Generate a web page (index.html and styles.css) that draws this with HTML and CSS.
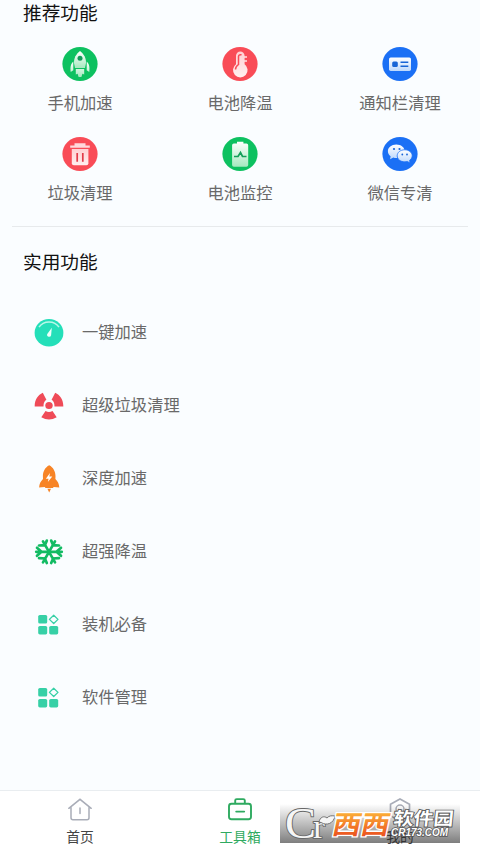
FILE: index.html
```html
<!DOCTYPE html>
<html lang="zh-CN">
<head>
<meta charset="utf-8">
<title>工具箱</title>
<link rel="stylesheet" href="styles.css">
</head>
<body>
<svg class="defs" width="0" height="0">
  <defs>
    <linearGradient id="fadeGreen" x2="0" y2="1"><stop offset="0" stop-color="#fff"/><stop offset="1" stop-color="#a5e9bf"/></linearGradient>
    <linearGradient id="fadeRed" x2="0" y2="1"><stop offset="0" stop-color="#ffd0d3"/><stop offset="1" stop-color="#fff0f0"/></linearGradient>
    <linearGradient id="fadeBlue" x2="0" y2="1"><stop offset="0" stop-color="#fff"/><stop offset="1" stop-color="#bdd8fc"/></linearGradient>
    <linearGradient id="orange" x2="0" y2="1"><stop offset="0.1" stop-color="#ffc23c"/><stop offset="0.9" stop-color="#e9481c"/></linearGradient>
    <symbol id="apps" viewBox="0 0 30 30">
      <g fill="#36d0a6"><rect x="4.2" y="5" width="9" height="8.6" rx="1.6"/><rect x="4.2" y="16" width="9" height="8.4" rx="1.6"/><rect x="15.2" y="16" width="9" height="8.4" rx="1.6"/></g>
      <path d="M19.7 5.3 24 9.4l-4.3 4.1-4.3-4.1z" fill="none" stroke="#36d0a6" stroke-width="1.3" stroke-linejoin="round"/>
    </symbol>
  </defs>
</svg>
<main class="content">
  <h2 class="title">推荐功能</h2>
  <section class="grid">
    <div class="tool">
      <svg viewBox="0 0 36 36"><ellipse cx="18" cy="18" rx="17.6" ry="17" fill="#0dc160"/><g fill="url(#fadeGreen)"><path d="M18 5c4 3 6.2 7.300 6 12l-1 5H13l-1-5c-.2-4.700 2-9 6-12z"/><path d="M11.300 15.500v8.700L8.700 26c-.5-5 0-8.200 2.600-10.500zM24.700 15.500v8.700l2.600 1.800c.5-5 0-8.200-2.600-10.500zM13.800 23h8.400v5.500l-1.800-.7-1 3.200h-2.800l-1-3.200-1.800.7z"/></g><circle cx="18" cy="12.300" r="2.500" fill="#119b59"/></svg>
      <span>手机加速</span>
    </div>
    <div class="tool">
      <svg viewBox="0 0 36 36"><ellipse cx="18" cy="18" rx="17.600" ry="17" fill="#f94c57"/><path d="M14 9.800a4.300 4.300 0 0 1 8.600 0v8.400a7.300 7.300 0 1 1-8.600 0z" fill="url(#fadeRed)"/><path d="M16.500 18.500v-8a2 2 0 0 1 3-1.500M16.500 14v4.500c-2 1.500-3.200 2.800-3 5" fill="none" stroke="#f94c57" stroke-width="1.500"/><path d="M22 11h3M22 15h3" stroke="#ffe0e2" stroke-width="1.300"/></svg>
      <span>电池降温</span>
    </div>
    <div class="tool">
      <svg viewBox="0 0 36 36"><ellipse cx="18" cy="18" rx="17.600" ry="17" fill="#1b70f5"/><rect x="7" y="11.500" width="22" height="13.500" rx="1.700" fill="url(#fadeBlue)"/><rect x="10.200" y="15.500" width="5.600" height="5.500" rx="1.500" fill="#1764d6"/><path d="M18.500 16.300h7.800M18.500 20.200h7.800" stroke="#1764d6" stroke-width="1.500"/></svg>
      <span>通知栏清理</span>
    </div>
    <div class="tool">
      <svg viewBox="0 0 36 36"><ellipse cx="18" cy="18" rx="17.600" ry="17" fill="#f94c57"/><path d="M12.500 9.500V7.300h11v2.200h4.300v2.200H8.200V9.500z" fill="#ffd9dc"/><path d="M9.800 13h16.600v14.300q0 2-2 2H11.800q-2 0-2-2z" fill="url(#fadeRed)"/><path d="M15.200 17v8.700M20.800 17v8.700" stroke="#e23b49" stroke-width="1.700"/></svg>
      <span>垃圾清理</span>
    </div>
    <div class="tool">
      <svg viewBox="0 0 36 36"><ellipse cx="18" cy="18" rx="17.600" ry="17" fill="#0dc160"/><path d="M15 7.500V5.800h6.400v1.700h3q1.800 0 1.800 1.800V29q0 1.700-1.800 1.700H11.900q-1.800 0-1.800-1.700V9.300q0-1.800 1.800-1.800z" fill="url(#fadeGreen)"/><path d="M12 20.500h4l2.500-4 2 4h4" fill="none" stroke="#149f5a" stroke-width="1.700"/></svg>
      <span>电池监控</span>
    </div>
    <div class="tool">
      <svg viewBox="0 0 36 36"><ellipse cx="18" cy="18" rx="17.600" ry="17" fill="#1b70f5"/><path d="M14.300 8.500c-4.800 0-8.400 3-8.400 6.700 0 2 1 3.800 2.700 5l-.5 3 3.200-1.600q1.500.5 3 .5c4.700 0 8.300-3 8.300-6.900s-3.600-6.700-8.300-6.700z" fill="url(#fadeBlue)"/><path d="M22.700 13.800c-4.300 0-7.500 2.600-7.500 6s3.200 6 7.500 6q1.400 0 2.600-.4l2.800 1.600-.5-2.700c1.600-1.100 2.600-2.700 2.600-4.500 0-3.400-3.300-6-7.500-6z" fill="url(#fadeBlue)" stroke="#1b70f5" stroke-width=".8"/><g fill="#1764d6"><circle cx="12" cy="13" r="1.100"/><circle cx="17.500" cy="13" r="1.100"/><circle cx="20.300" cy="18.500" r=".9"/><circle cx="25" cy="18.500" r=".9"/></g></svg>
      <span>微信专清</span>
    </div>
  </section>
  <hr class="divider">
  <h2 class="title">实用功能</h2>
  <ul class="list">
    <li><svg viewBox="0 0 30 30"><ellipse cx="15" cy="14.800" rx="14.400" ry="13.800" fill="#24dfb9"/><path d="M5 9.200C9.500 2.200 20.500 2.200 25 9.200" fill="none" stroke="#baf7e9" stroke-width="1.500"/><path d="m17.800 9.800-.7 7.400a2 2 0 0 1-4-1z" fill="#edfffb"/></svg><span>一键加速</span></li>
    <li><svg viewBox="0 0 30 30"><g fill="#ef4b58"><ellipse cx="15" cy="14.500" rx="3.700" ry="3.500"/><path d="M.7 15.500C.5 9 4 4 8.800 1.800L12.400 8.800C10.500 10 9.500 12 9.500 15.500zM21.200 1.800C26 4 29.500 9 29.300 15.500H20.500c0-3.500-1-5.500-2.900-6.700zM11.500 20q3.500 2 7 0l4.200 6.200q-7.700 4.600-15.400 0z"/></g></svg><span>超级垃圾清理</span></li>
    <li><svg viewBox="0 0 30 30"><path d="M15.200 1.300c4 2 6.300 6.300 6.300 11l-.1 2.700c2.600 2.500 3.600 5 3.900 8.400l-5.600-.5-.8 1.100h-7.400l-.8-1.100-5.600.5c.3-3.400 1.300-5.900 3.900-8.400L8.900 12.300c0-4.700 2.300-9 6.300-11zM13.400 24.800h3.600L15.200 28.500z" fill="#f78426"/><path d="m16 9-4.200 5.700h2.800L13.800 18l4.500-5.600h-3z" fill="#fff"/></svg><span>深度加速</span></li>
    <li><svg viewBox="0 0 30 30"><g fill="none" stroke="#12bb63" stroke-width="2.700" stroke-linecap="round"><path d="M2.200 14.800H27.800M27 10.800 22.500 14.800 27 18.800M3 10.800 7.500 14.800 3 18.800"/><path d="M9 4.300 21 25.300M5 8.500l5.900-.4L12.800 3.600M17.200 26l1.900-4.500 5.900-.4M21 4.300 9 25.300M17.200 3.600l1.900 4.500 5.900.4M5 21.100l5.900.4 1.900 4.500"/></g></svg><span>超强降温</span></li>
    <li><svg><use href="#apps"/></svg><span>装机必备</span></li>
    <li><svg><use href="#apps"/></svg><span>软件管理</span></li>
  </ul>
</main>
<nav class="tabs">
  <a class="tab"><svg viewBox="0 0 28 28"><path d="M2.800 12.300 14 3.300l11.200 9M5 11v10.700q0 2 2 2h14q2 0 2-2V11M14 12v5.500" fill="none" stroke="#a9adb8" stroke-width="1.500" stroke-linecap="round"/></svg>首页</a>
  <a class="tab active"><svg viewBox="0 0 28 28"><g fill="none" stroke="#2faa60" stroke-width="1.900" stroke-linecap="round"><rect x="3" y="7.700" width="22" height="15.600" rx="2.500"/><path d="M9.200 7V4.600q0-1.500 1.500-1.500h6.600q1.500 0 1.500 1.500V7M10.200 15.600h8"/></g></svg>工具箱</a>
  <a class="tab"><svg viewBox="0 0 28 28"><path d="m14 3 9.500 5.300v11.400L14 25l-9.500-5.300V8.300z" fill="none" stroke="#a9adb8" stroke-width="1.700"/><circle cx="14" cy="13" r="4" fill="none" stroke="#a9adb8" stroke-width="1.500"/></svg>我的</a>
</nav>
<svg class="watermark" viewBox="0 0 180 39">
  <text class="serif" y="34" fill="#f6f6f6" stroke="#686868" stroke-width="1.800" paint-order="stroke"><tspan x="5" font-size="45" textLength="31" lengthAdjust="spacingAndGlyphs">C</tspan><tspan x="33" font-size="33" textLength="12" lengthAdjust="spacingAndGlyphs">r</tspan></text>
  <path d="M39 18c1-5 5-6.500 8-4 2-2.500 5-2.500 8-2-1.500 7.500-8 10-14 6.500z" fill="#f6f6f6" stroke="#686868" stroke-width=".9" stroke-linejoin="round"/>
  <g transform="translate(51 30) skewX(-12)"><text class="brand" font-size="26" textLength="57" lengthAdjust="spacingAndGlyphs" fill="url(#orange)" stroke="#fff" stroke-width="2.600" paint-order="stroke">西西</text></g>
  <g transform="translate(113 21) skewX(-6)"><text class="brand" font-size="18" textLength="60" lengthAdjust="spacingAndGlyphs" fill="#fff" stroke="#555" stroke-width="1.600" paint-order="stroke">软件园</text></g>
  <text class="domain" x="111" y="31.500" font-size="10" textLength="57" lengthAdjust="spacingAndGlyphs" fill="#fff" stroke="#555" stroke-width="1.600" paint-order="stroke">CR173.COM</text>
</svg>
</body>
</html>
```
FILE: styles.css
```css
* { box-sizing: border-box; }

body {
  margin: 0;
  height: 853px;
  display: flex;
  flex-direction: column;
  overflow: hidden;
  background: #fafdff;
  color: #696969;
  font-family: "Noto Sans CJK SC", sans-serif;
}

.defs { position: absolute; }

.content { flex: 1; }

.title {
  margin: 0;
  padding-left: 23px;
  height: 26px;
  line-height: 24px;
  font-size: 18.7px;
  font-weight: 400;
  color: #111;
}

.grid {
  display: grid;
  grid-template-columns: repeat(3, 1fr);
  grid-auto-rows: 90px;
  padding-top: 20px;
}

.tool {
  display: flex;
  flex-direction: column;
  align-items: center;
  font-size: 16.3px;
  line-height: 24px;
}

.tool svg { width: 36px; height: 36px; margin-bottom: 8px; }

.divider {
  height: 1px;
  margin: 0 12px 22px;
  border: 0;
  background: #e7eaec;
}

.list {
  margin: 21px 0 0;
  padding: 0 0 0 34px;
  list-style: none;
}

.list li {
  display: flex;
  align-items: center;
  gap: 18px;
  height: 73px;
  font-size: 16.3px;
}

.list span { padding-bottom: 3px; }

.list svg { width: 30px; height: 30px; }

.tabs {
  display: flex;
  height: 63px;
  border-top: 1px solid #e9edf0;
  background: #fff;
}

.tab {
  flex: 1;
  display: flex;
  flex-direction: column;
  align-items: center;
  padding-top: 5px;
  font-size: 13.8px;
  line-height: 20px;
  color: #444;
}

.tab svg { width: 28px; height: 28px; margin-bottom: 2px; }

.tab.active { color: #2faa60; }

.watermark {
  position: absolute;
  left: 280px;
  top: 804px;
  width: 180px;
  height: 39px;
  overflow: visible;
  background: linear-gradient(rgba(40, 40, 40, 0), rgba(40, 40, 40, .6));
}

.serif { font-family: "Liberation Serif", serif; }

.brand { font-family: "Noto Sans CJK SC", sans-serif; font-weight: 700; }

.domain { font-family: "Liberation Sans", sans-serif; font-weight: 700; font-style: italic; }
```
